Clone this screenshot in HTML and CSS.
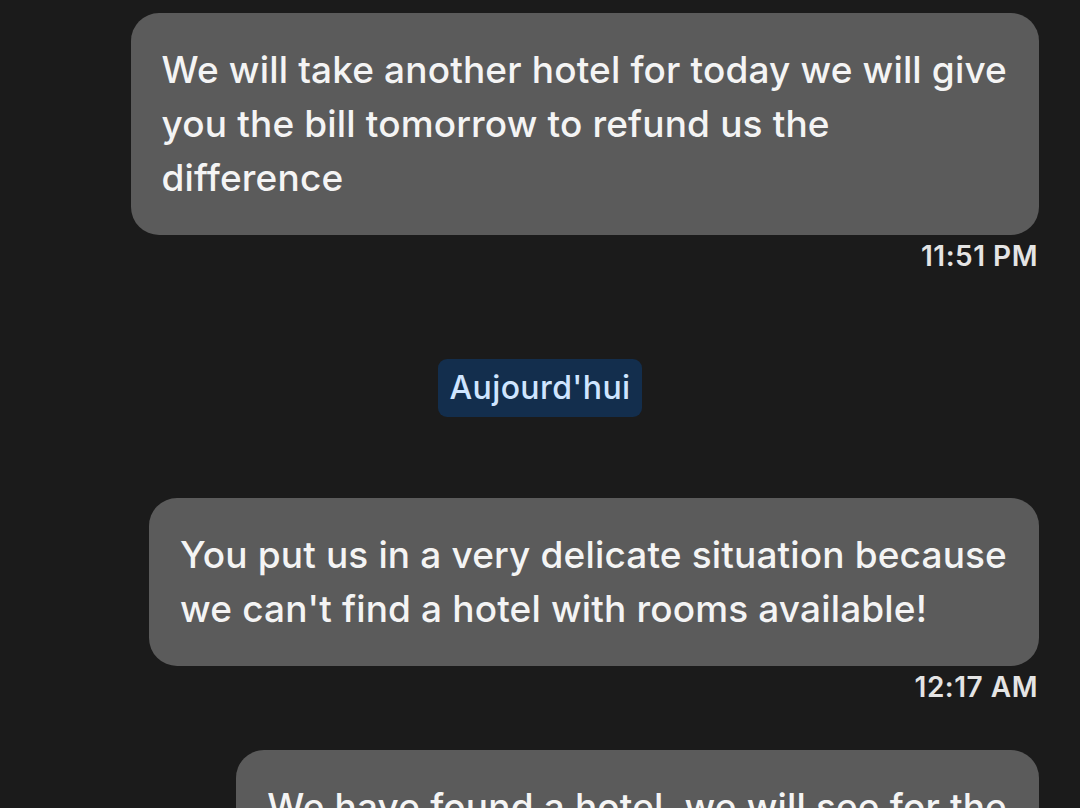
FILE: index.html
```html
<!DOCTYPE html>
<html lang="en">
<head>
<meta charset="utf-8">
<title>Chat</title>
<link rel="stylesheet" href="styles.css">
</head>
<body>
<main class="thread">
  <div class="msg">
    <div class="bubble">We will take another hotel for today we will give<br>you the bill tomorrow to refund us the<br>difference</div>
    <div class="time">11:51 PM</div>
  </div>

  <div class="day"><span class="chip">Aujourd'hui</span></div>

  <div class="msg">
    <div class="bubble">You put us in a very delicate situation because<br>we can't find a hotel with rooms available!</div>
    <div class="time">12:17 AM</div>
  </div>

  <div class="msg">
    <div class="bubble">We have found a hotel, we will see for the<br>rest of the stay</div>
  </div>
</main>
</body>
</html>
```
FILE: styles.css
```css
html, body {
  margin: 0;
  padding: 0;
  background: #1b1b1b;
  height: 808px;
  overflow: hidden;
}
body {
  font-family: Inter, "Noto Sans", "Liberation Sans", sans-serif;
  color: #f4f4f4;
}
.thread {
  display: flex;
  flex-direction: column;
  padding: 13px 41px 0 0;
}
.msg {
  display: flex;
  flex-direction: column;
  align-items: flex-end;
}
.bubble {
  background: #5b5b5b;
  border-radius: 28px;
  padding: 30px 32px 30px 31px;
  font-size: 37px;
  line-height: 54px;
  letter-spacing: 0.15px;
  font-weight: 500;
  white-space: nowrap;
}
.time {
  margin-top: 5px;
  margin-right: 1px;
  font-size: 28px;
  line-height: 32px;
  letter-spacing: 0.5px;
  font-weight: 600;
  color: #e4e4e4;
}
.day {
  display: flex;
  justify-content: center;
  margin: 87px -41px 81px 0;
}
.chip {
  background: #132e4d;
  color: #cfe5ff;
  border-radius: 9px;
  padding: 0 11px;
  font-size: 32px;
  line-height: 58px;
  letter-spacing: 0.4px;
  font-weight: 500;
}
.msg + .msg {
  margin-top: 47px;
}
```
